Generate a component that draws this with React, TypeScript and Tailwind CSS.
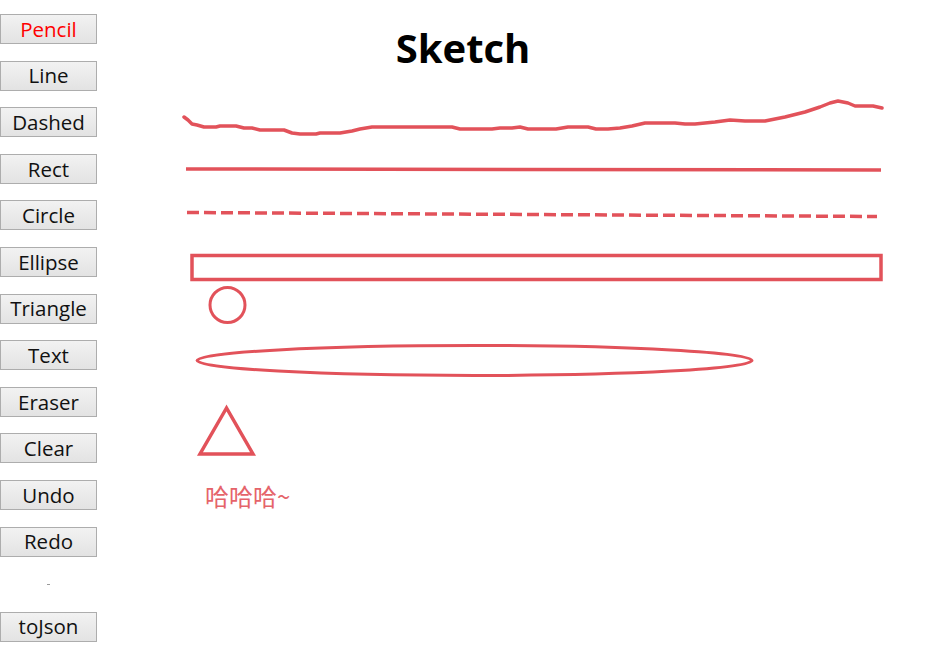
const tools = [
  "Pencil",
  "Line",
  "Dashed",
  "Rect",
  "Circle",
  "Ellipse",
  "Triangle",
  "Text",
  "Eraser",
  "Clear",
  "Undo",
  "Redo",
];

const pencil: [number, number][] = [
  [184, 117], [188, 120], [192, 124], [197, 125], [204, 127], [216, 127], [220, 126],
  [236, 126], [244, 128], [252, 128], [260, 130], [284, 130], [292, 133], [300, 134],
  [316, 134], [320, 133], [340, 133], [352, 131], [360, 129], [372, 127], [452, 127],
  [460, 129], [492, 129], [500, 128], [512, 128], [520, 127], [528, 129], [556, 129],
  [568, 127], [588, 127], [596, 129], [608, 129], [620, 128], [632, 126], [645, 123],
  [675, 123], [685, 124], [695, 124], [715, 122], [730, 120], [745, 121], [765, 121],
  [785, 117], [805, 112], [820, 107], [830, 103], [838, 101], [848, 103], [855, 106],
  [873, 106], [882, 108],
];

const stroke = "#e2525a";

function ToolButton({ label, active }: { label: string; active?: boolean }) {
  return (
    <button
      className={`h-[30px] w-[97px] border border-[#adadad] bg-gradient-to-b from-[#f2f2f2] to-[#e3e3e3] text-[20.5px] leading-none ${
        active ? "text-[#ff0000]" : "text-[#111111]"
      }`}
    >
      {label}
    </button>
  );
}

export default function App() {
  return (
    <div className="flex h-[658px] w-[926px] bg-white font-['Open_Sans','Noto_Sans',sans-serif]">
      <aside className="flex w-[97px] shrink-0 flex-col gap-[16.6px] pt-[14px]">
        {tools.map((t) => (
          <ToolButton key={t} label={t} active={t === "Pencil"} />
        ))}
        <div className="flex h-[21.8px] items-center justify-center">
          <span className="h-[1px] w-[3px] bg-[#9a9a9a]" />
        </div>
        <ToolButton label="toJson" />
      </aside>

      <main className="flex flex-1 flex-col">
        <h1 className="mr-[97px] pt-[22px] text-center text-[40px] font-bold leading-[52px] text-black">
          Sketch
        </h1>
        <svg
          width={829}
          height={584}
          viewBox="97 74 829 584"
          className="block"
          fill="none"
          stroke={stroke}
          strokeWidth={3.5}
        >
          <polyline
            points={pencil.map((p) => p.join(",")).join(" ")}
            strokeLinejoin="round"
            strokeLinecap="round"
          />
          <line x1={186} y1={169} x2={881} y2={170} />
          <line x1={187} y1={212.5} x2={877} y2={216.5} strokeDasharray="12 5" />
          <rect x={192} y={255.5} width={689} height={24} />
          <circle cx={227.5} cy={305} r={17.5} strokeWidth={3} />
          <ellipse cx={474.5} cy={360.5} rx={277.5} ry={15} strokeWidth={3} />
          <polygon points="226.5,408 200,454 253,454" strokeLinejoin="miter" />
          <text
            x={205}
            y={506}
            fill="#e5646a"
            stroke="none"
            fontSize={24}
            fontFamily="'Noto Sans CJK SC', 'Noto Sans', sans-serif"
          >
            哈哈哈~
          </text>
        </svg>
      </main>
    </div>
  );
}
